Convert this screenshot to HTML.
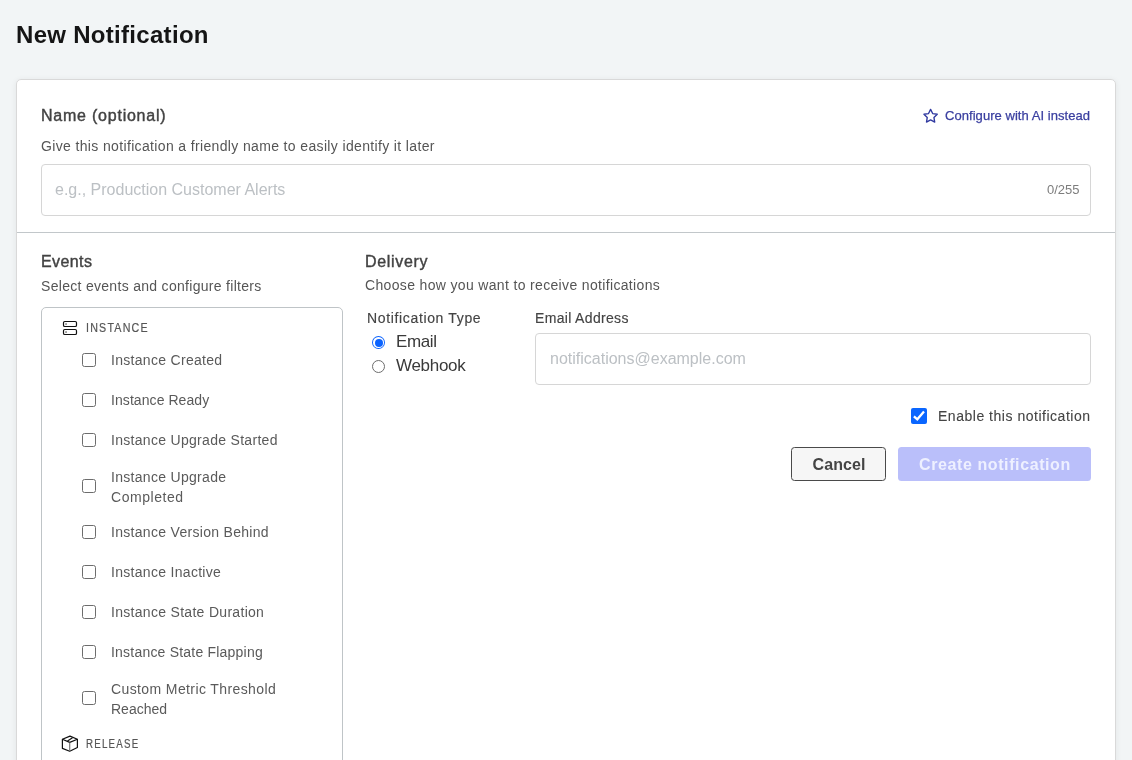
<!DOCTYPE html>
<html><head><meta charset="utf-8">
<style>
*{box-sizing:border-box;margin:0;padding:0}
html,body{width:1132px;height:760px;overflow:hidden;background:#f2f5f6;font-family:"Liberation Sans",sans-serif}
.a{position:absolute;white-space:nowrap;line-height:1}
.card{position:absolute;left:16px;top:79px;width:1100px;height:700px;background:#fff;border:1px solid #d9d9d9;border-radius:5px;box-shadow:0 1px 6px rgba(0,0,0,.07)}
.hr{position:absolute;left:17px;top:232px;width:1098px;height:1px;background:#c2c7ca}
.inp{position:absolute;background:#fff;border:1px solid #d6d6d6;border-radius:4px}
.cb{position:absolute;width:14px;height:14px;border:1px solid #6d6d6d;border-radius:2.5px;background:#fff}
.lbl{color:#5a5a5a;font-size:14px;letter-spacing:.3px}
.h{color:#424242;font-size:16px;-webkit-text-stroke:.4px #424242}
.sub{color:#555;font-size:14px;letter-spacing:.34px}
.cat{font-size:12px;color:#555;letter-spacing:.45px;-webkit-text-stroke:.25px #555}
.ph{color:#bcc0c4;font-size:16px}
#w{position:absolute;left:0;top:0;width:1132px;height:760px;will-change:transform}
</style></head><body><div id="w">
<div class="a" style="left:16px;top:23px;font-size:24px;font-weight:bold;color:#151515;letter-spacing:.3px">New Notification</div>
<div class="card"></div>
<div class="hr"></div>

<div class="a h" style="left:41px;top:108px;letter-spacing:.77px">Name (optional)</div>
<svg style="position:absolute;left:918px;top:104px" width="24" height="24" viewBox="0 0 24 24" fill="none" stroke="#3039a0" stroke-width="1.35" stroke-linejoin="round"><path d="M12.60 5.40 L14.66 9.57 L19.26 10.24 L15.93 13.48 L16.71 18.06 L12.60 15.90 L8.49 18.06 L9.27 13.48 L5.94 10.24 L10.54 9.57Z"/></svg>
<div class="a" style="left:945px;top:109px;font-size:13px;color:#3a3fa0;letter-spacing:.05px;-webkit-text-stroke:.25px #3a3fa0">Configure with AI instead</div>
<div class="a sub" style="left:41px;top:139px;letter-spacing:.355px">Give this notification a friendly name to easily identify it later</div>
<div class="inp" style="left:41px;top:164px;width:1050px;height:52px"></div>
<div class="a ph" style="left:55px;top:182px">e.g., Production Customer Alerts</div>
<div class="a" style="left:1047px;top:183px;font-size:13px;color:#7d7d7d">0/255</div>

<div class="a h" style="left:41px;top:254px;letter-spacing:.4px">Events</div>
<div class="a sub" style="left:41px;top:279px;letter-spacing:.3px">Select events and configure filters</div>
<div style="position:absolute;left:41px;top:307px;width:302px;height:500px;border:1px solid #bfc4c7;border-radius:5px;background:#fff"></div>

<svg style="position:absolute;left:58px;top:316px" width="24" height="24" viewBox="0 0 24 24" fill="none" stroke="#111" stroke-width="1.2"><rect x="5.5" y="5.5" width="13" height="5" rx="1.3"/><rect x="5.5" y="13.5" width="13" height="5" rx="1.3"/><rect x="7.3" y="7.3" width="1.5" height="1.5" fill="#666" stroke="none"/><rect x="7.3" y="15.3" width="1.5" height="1.5" fill="#666" stroke="none"/></svg>
<div class="a cat" style="left:86px;top:322px;letter-spacing:1.35px;-webkit-text-stroke:.2px #555;transform:scaleX(.89);transform-origin:0 0">INSTANCE</div>
<div class="cb" style="left:82px;top:353px"></div>
<div class="a lbl" style="left:111px;top:353px">Instance Created</div>
<div class="cb" style="left:82px;top:393px"></div>
<div class="a lbl" style="left:111px;top:393px;letter-spacing:.07px">Instance Ready</div>
<div class="cb" style="left:82px;top:433px"></div>
<div class="a lbl" style="left:111px;top:433px">Instance Upgrade Started</div>
<div class="cb" style="left:82px;top:479px"></div>
<div class="a lbl" style="left:111px;top:467px;line-height:20px;white-space:normal">Instance Upgrade<br><span style="letter-spacing:.55px">Completed</span></div>
<div class="cb" style="left:82px;top:525px"></div>
<div class="a lbl" style="left:111px;top:525px">Instance Version Behind</div>
<div class="cb" style="left:82px;top:565px"></div>
<div class="a lbl" style="left:111px;top:565px">Instance Inactive</div>
<div class="cb" style="left:82px;top:605px"></div>
<div class="a lbl" style="left:111px;top:605px">Instance State Duration</div>
<div class="cb" style="left:82px;top:645px"></div>
<div class="a lbl" style="left:111px;top:645px;letter-spacing:.21px">Instance State Flapping</div>
<div class="cb" style="left:82px;top:691px"></div>
<div class="a lbl" style="left:111px;top:679px;line-height:20px;white-space:normal"><span style="letter-spacing:.39px">Custom Metric Threshold</span><br><span style="letter-spacing:0">Reached</span></div>
<svg style="position:absolute;left:58px;top:732px" width="24" height="24" viewBox="0 0 24 24" fill="none" stroke="#111" stroke-width="1.2" stroke-linejoin="round"><path d="M12 4.1L19.4 7.3V15.5L11.7 19.3L4.4 16.4V7.3Z"/><path d="M4.4 7.3L11.7 10.4L19.4 7.3"/><path d="M11.7 10.4V19.3" stroke="#777"/><path d="M14.5 5.8L9.5 9"/></svg>
<div class="a cat" style="left:86px;top:738px;letter-spacing:1.5px;-webkit-text-stroke:.2px #555;transform:scaleX(.81);transform-origin:0 0">RELEASE</div>

<div class="a h" style="left:365px;top:254px;letter-spacing:.67px">Delivery</div>
<div class="a sub" style="left:365px;top:278px">Choose how you want to receive notifications</div>
<div class="a" style="left:367px;top:311px;font-size:14px;color:#444;letter-spacing:.65px;-webkit-text-stroke:.15px #444">Notification Type</div>
<div class="a" style="left:535px;top:311px;font-size:14px;color:#444;letter-spacing:.33px;-webkit-text-stroke:.15px #444">Email Address</div>
<div class="inp" style="left:535px;top:333px;width:556px;height:52px"></div>
<div class="a ph" style="left:550px;top:351px">notifications@example.com</div>

<div class="a" style="left:396px;top:333px;font-size:17px;color:#3a3a3a;letter-spacing:-.4px">Email</div>
<div class="a" style="left:396px;top:357px;font-size:17px;color:#3a3a3a;letter-spacing:-.3px">Webhook</div>
<div style="position:absolute;left:372px;top:336px;width:13px;height:13px;border-radius:50%;background:#0b63ff"><div style="position:absolute;left:1.2px;top:1.2px;width:10.6px;height:10.6px;border-radius:50%;background:#fff"></div><div style="position:absolute;left:2.5px;top:2.5px;width:8px;height:8px;border-radius:50%;background:#0b63ff"></div></div>
<div style="position:absolute;left:372px;top:360px;width:13px;height:13px;border-radius:50%;border:1px solid #6d6d6d;background:#fff"></div>


<div style="position:absolute;left:911px;top:408px;width:16px;height:16px;border-radius:2px;background:#0a66ff"></div>
<svg style="position:absolute;left:906px;top:404px" width="24" height="24" viewBox="0 0 24 24" fill="none" stroke="#fff" stroke-width="2.3" stroke-linecap="butt"><path d="M7.9 12.3L11.3 15.3L18 7.6"/></svg>
<div class="a" style="left:938px;top:409px;font-size:14px;color:#444;letter-spacing:.52px;-webkit-text-stroke:.1px #444">Enable this notification</div>

<div style="position:absolute;left:791px;top:447px;width:95px;height:34px;border:1.5px solid #4a4a4a;border-radius:3.5px;background:#f6f6f6"></div>
<div class="a" style="left:812.5px;top:457px;font-size:16px;font-weight:bold;color:#444;letter-spacing:.1px">Cancel</div>
<div style="position:absolute;left:898px;top:447px;width:193px;height:34px;border-radius:3.5px;background:#babffa"></div>
<div class="a" style="left:919px;top:457px;font-size:16px;font-weight:bold;color:#eef0ff;letter-spacing:.6px">Create notification</div>
</div></body></html>
